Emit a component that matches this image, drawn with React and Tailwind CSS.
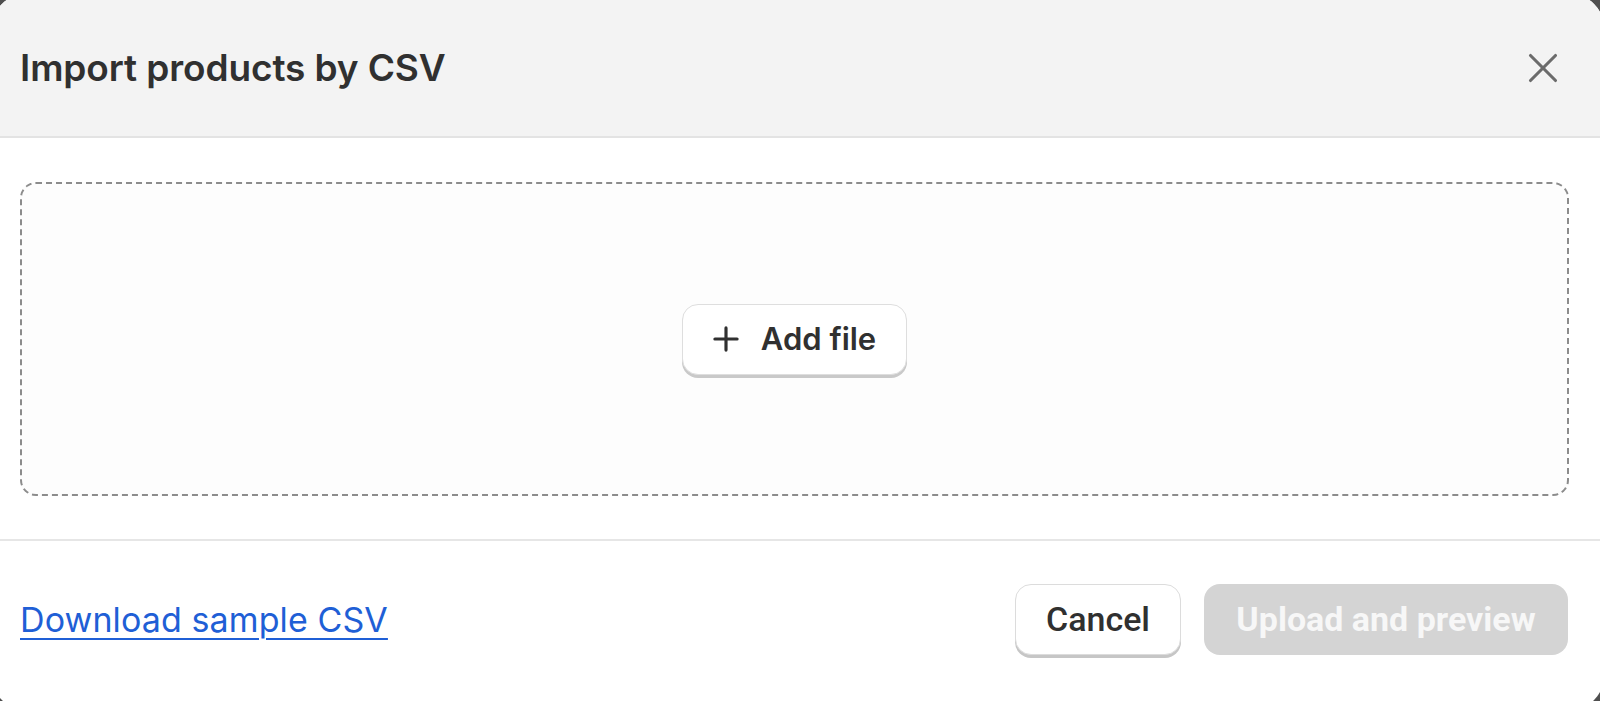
import React from 'react';
import { X, Plus } from 'lucide-react';

export default function App() {
  return (
    <div className="w-[1600px] h-[701px] overflow-hidden bg-[#4f4f4f]" style={{ fontFamily: 'Inter, "Noto Sans", sans-serif' }}>
      <div className="w-[1612px] h-[716px] -ml-[8px] -mt-[6px] rounded-[34px] overflow-hidden bg-white flex flex-col">
        {/* header */}
        <div className="h-[144px] shrink-0 bg-[#f3f3f3] border-b-2 border-[#e3e3e3] flex items-center pl-[28px] pr-[36px] pt-[6px]">
          <h1 className="text-[37px] font-semibold text-[#303030] tracking-[-0.1px]">Import products by CSV</h1>
          <button className="ml-auto text-[#6b6b6b]">
            <X size={50} strokeWidth={1.5} />
          </button>
        </div>

        {/* body */}
        <div className="h-[403px] shrink-0 border-b-2 border-[#e6e6e6] pl-[28px] pr-[35px] pt-[44px]">
          <div className="h-[314px] rounded-[16px] border-2 border-dashed border-[#8c8c8c] bg-[#fdfdfd] flex items-center justify-center">
            <button className="flex items-center gap-[16px] h-[71px] pl-[24px] pr-[30px] rounded-[16px] bg-white border border-[#dedede] shadow-[0_3px_0_#c9c9c9] text-[31px] font-semibold text-[#303030]">
              <Plus size={38} strokeWidth={2} />
              Add file
            </button>
          </div>
        </div>

        {/* footer */}
        <div className="flex-1 flex items-center pl-[28px] pr-[36px] pb-[12px]">
          <a href="#" className="text-[34px] text-[#1f5fd6] underline underline-offset-[6px] decoration-2 tracking-[0.1px]">Download sample CSV</a>
          <div className="ml-auto flex items-center gap-[23px]">
            <button className="h-[71px] w-[166px] rounded-[16px] bg-white border border-[#dcdcdc] shadow-[0_3px_0_#c6c6c6] text-[34px] font-medium text-[#303030]" style={{ fontFamily: 'Roboto, sans-serif' }}>
              Cancel
            </button>
            <button className="h-[71px] w-[364px] rounded-[16px] bg-[#d4d4d4] text-[34px] font-bold text-[#f7f7f7]" style={{ fontFamily: 'Roboto, sans-serif' }}>
              Upload and preview
            </button>
          </div>
        </div>
      </div>
    </div>
  );
}
